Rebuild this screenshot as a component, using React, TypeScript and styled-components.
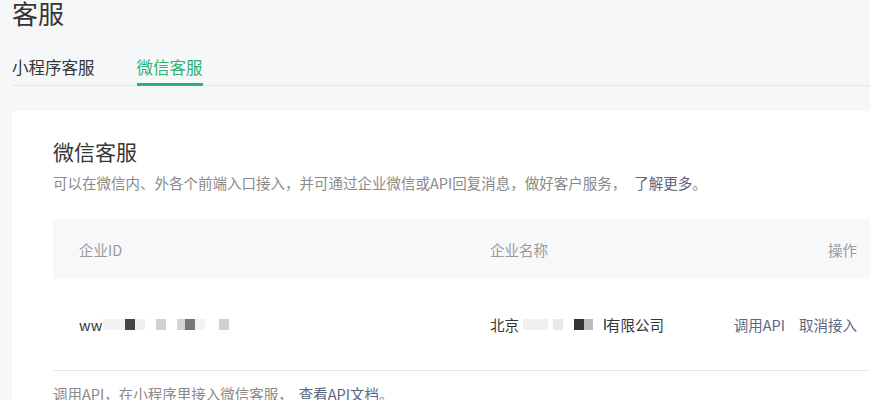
import React from 'react';
import styled, { createGlobalStyle } from 'styled-components';

const GlobalStyle = createGlobalStyle`
  body {
    margin: 0;
    background: #f6f7f9;
    overflow: hidden;
    font-family: "Noto Sans CJK SC", "Liberation Sans", sans-serif;
    color: #353535;
  }
`;

const Page = styled.div`
  width: 910px;
  padding-left: 12px;
`;

const PageTitle = styled.h1`
  margin: 0;
  font-size: 26px;
  line-height: 26px;
  font-weight: 400;
  color: #353535;
`;

const TabBar = styled.div`
  display: flex;
  gap: 42px;
  margin-top: 29px;
  border-bottom: 1px solid #e4e7ea;
`;

const Tab = styled.div<{ $active?: boolean }>`
  font-size: 16.5px;
  line-height: 24px;
  padding-bottom: 4px;
  margin-bottom: -1px;
  color: ${(p) => (p.$active ? '#2fb170' : '#353535')};
  border-bottom: 3px solid ${(p) => (p.$active ? '#2fb170' : 'transparent')};
`;

const Card = styled.div`
  margin-top: 25px;
  background: #ffffff;
  padding: 26px 41px 0 41px;
  min-height: 300px;
`;

const CardTitle = styled.h2`
  margin: 0;
  font-size: 21px;
  line-height: 28px;
  font-weight: 400;
  color: #353535;
`;

const Desc = styled.p`
  margin: 8px 0 0;
  font-size: 14.5px;
  line-height: 20px;
  color: #8a8a8a;
`;

const Link = styled.a<{ $space?: number }>`
  color: #5b6684;
  text-decoration: none;
  margin-left: ${(p) => p.$space ?? 0}px;
`;

const Table = styled.div`
  margin-top: 26px;
`;

const Row = styled.div<{ $head?: boolean }>`
  display: grid;
  grid-template-columns: 411px 1fr auto;
  align-items: center;
  height: ${(p) => (p.$head ? 60 : 91)}px;
  padding: 0 24px 0 26px;
  font-size: 14.5px;
  background: ${(p) => (p.$head ? '#f6f8f9' : '#ffffff')};
  color: ${(p) => (p.$head ? '#9a9a9a' : '#353535')};
  border-bottom: ${(p) => (p.$head ? 'none' : '1px solid #e8e8e8')};
`;

const Cell = styled.div`
  display: flex;
  align-items: center;
`;

const Pixel = styled.span<{ $w: number; $c: string; $gap?: number }>`
  display: inline-block;
  width: ${(p) => p.$w}px;
  height: 11px;
  background: ${(p) => p.$c};
  margin-left: ${(p) => p.$gap ?? 0}px;
`;

const Ops = styled.div`
  display: flex;
  gap: 14px;
`;

const OpLink = styled.a`
  color: #5b6684;
  text-decoration: none;
`;

const Footer = styled.p`
  margin: 13px 0 0;
  font-size: 14.5px;
  line-height: 20px;
  color: #8a8a8a;
`;

const idPixels = [
  { w: 22, c: '#f2f2f2', gap: 1 },
  { w: 10, c: '#454545' },
  { w: 10, c: '#f0f0f0' },
  { w: 10, c: '#d0d0d0', gap: 11 },
  { w: 8, c: '#d4d4d4', gap: 11 },
  { w: 10, c: '#777777' },
  { w: 10, c: '#f3f3f3' },
  { w: 10, c: '#d0d0d0', gap: 14 },
];

const namePixels = [
  { w: 25, c: '#f0f0f0', gap: 4 },
  { w: 10, c: '#e9e9e9', gap: 5 },
  { w: 10, c: '#333333', gap: 11 },
  { w: 9, c: '#bbbbbb' },
  { w: 2, c: '#666666', gap: 11 },
];

const App = (): JSX.Element => {
  return (
    <Page>
      <GlobalStyle />
      <PageTitle>客服</PageTitle>
      <TabBar>
        <Tab>小程序客服</Tab>
        <Tab $active>微信客服</Tab>
      </TabBar>
      <Card>
        <CardTitle>微信客服</CardTitle>
        <Desc>
          可以在微信内、外各个前端入口接入，并可通过企业微信或API回复消息，做好客户服务，
          <Link $space={8}>了解更多</Link>。
        </Desc>
        <Table>
          <Row $head>
            <Cell>企业ID</Cell>
            <Cell>企业名称</Cell>
            <Cell>操作</Cell>
          </Row>
          <Row>
            <Cell>
              ww
              {idPixels.map((p, i) => (
                <Pixel key={i} $w={p.w} $c={p.c} $gap={p.gap} />
              ))}
            </Cell>
            <Cell>
              北京
              {namePixels.map((p, i) => (
                <Pixel key={i} $w={p.w} $c={p.c} $gap={p.gap} />
              ))}
              有限公司
            </Cell>
            <Ops>
              <OpLink>调用API</OpLink>
              <OpLink>取消接入</OpLink>
            </Ops>
          </Row>
        </Table>
        <Footer>
          调用API，在小程序里接入微信客服，
          <Link $space={6}>查看API文档</Link>。
        </Footer>
      </Card>
    </Page>
  );
};

export default App;
